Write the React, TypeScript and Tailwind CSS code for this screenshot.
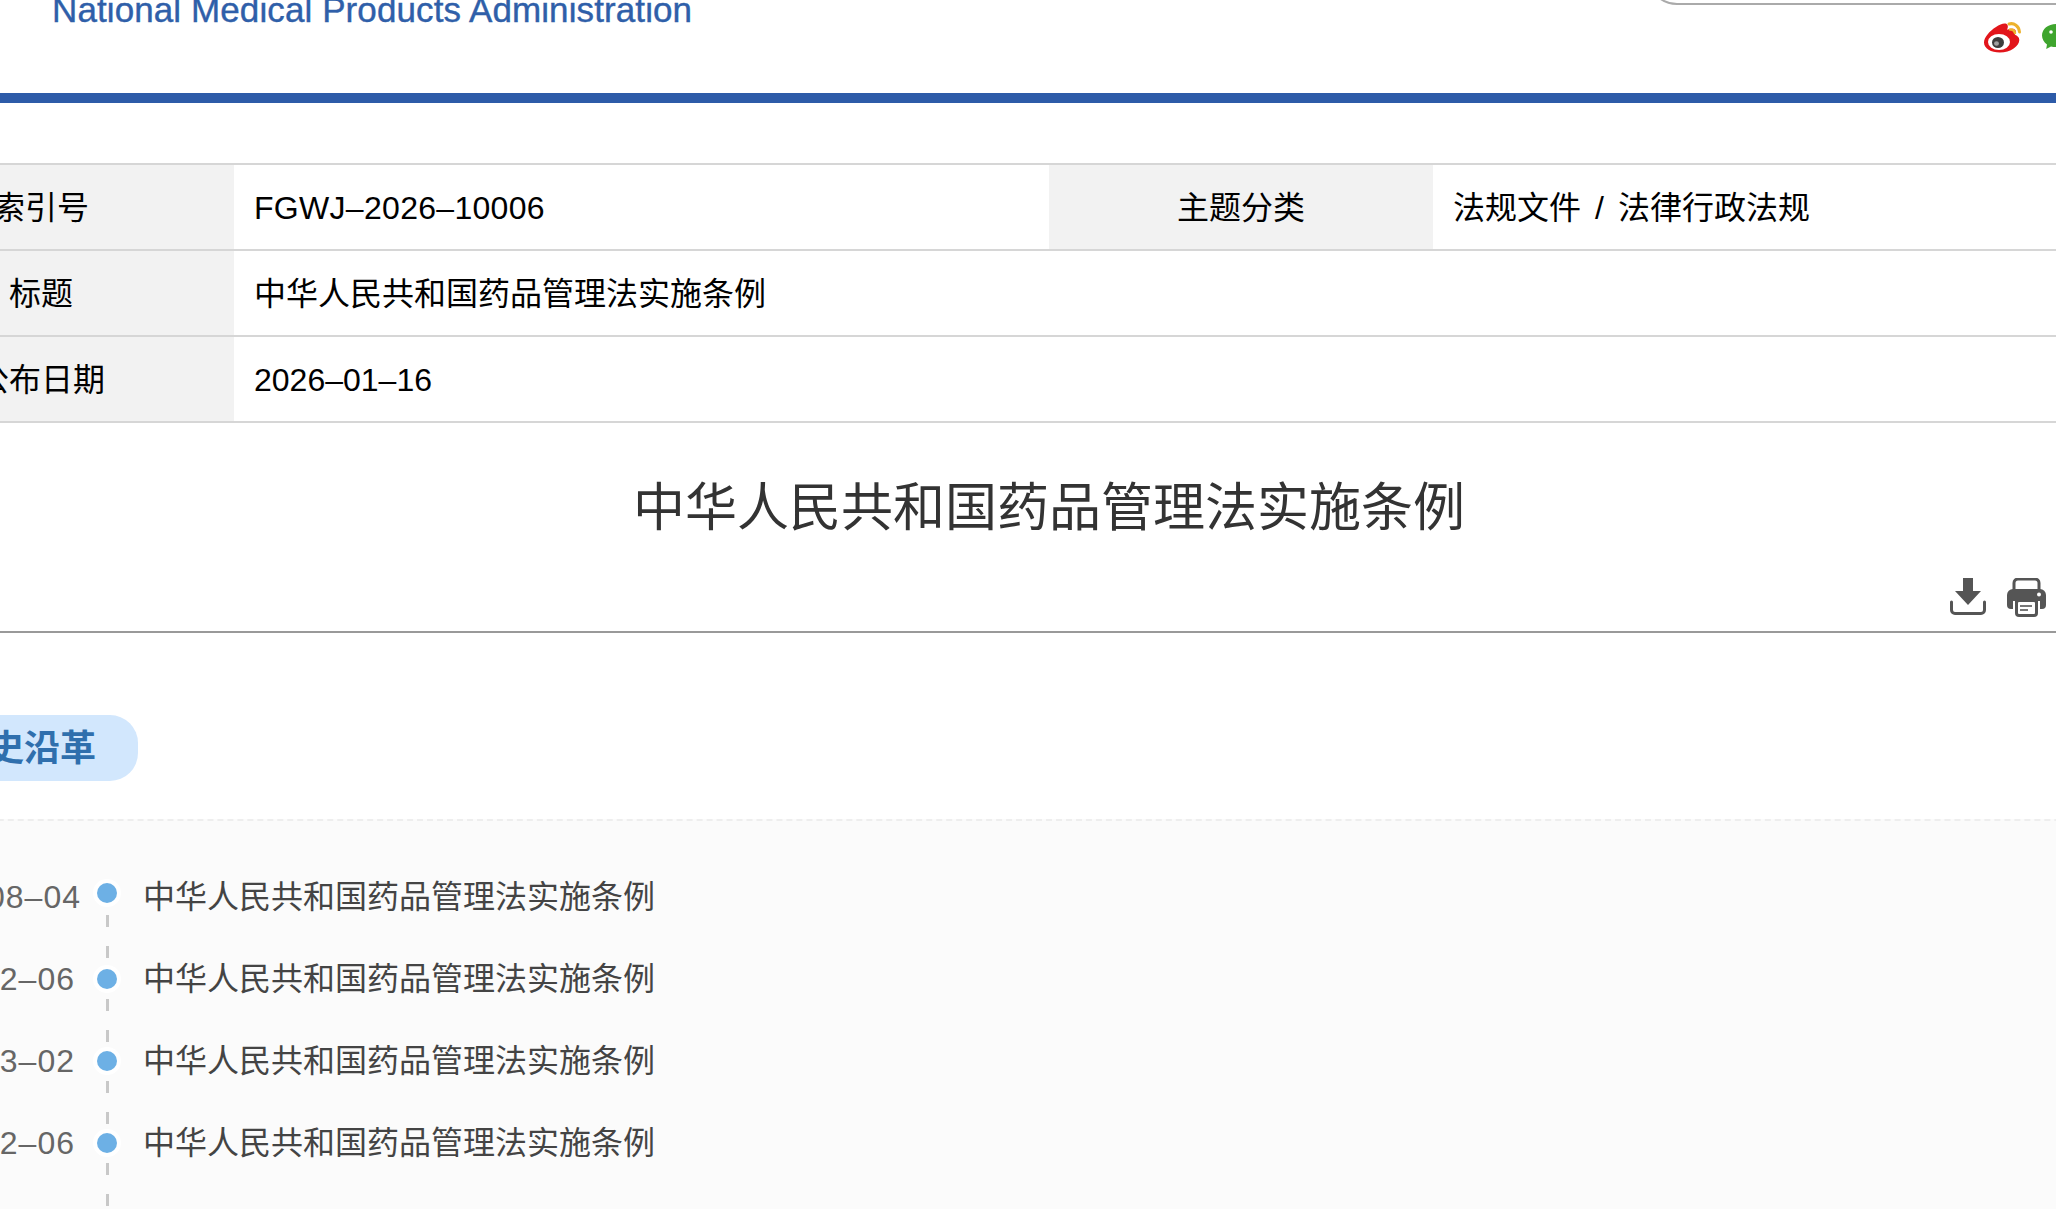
const title = "中华人民共和国药品管理法实施条例";

const history = [
  { date: "2002–08–04", name: title, narrow: false },
  { date: "2016–02–06", name: title, narrow: true },
  { date: "2019–03–02", name: title, narrow: true },
  { date: "2016–02–06", name: title, narrow: true },
];

function WeiboIcon() {
  return (
    <svg width="42" height="34" viewBox="0 0 42 34" className="block">
      <path d="M14 7c5-3.500 10-4.500 11.500-2 .7 1.300.3 3-.5 4.700 3.300-1.200 7-1.600 8.300.3 1 1.400.5 3.200-.5 4.800 2.500.8 4.500 2.500 4.500 5.200 0 6-8.500 12.500-19.500 12.500C9 32.500 2 28.500 2 22.500 2 17.500 7.500 11 14 7z" fill="#e2151b" />
      <ellipse cx="17" cy="22" rx="11" ry="8" fill="#ffffff" />
      <ellipse cx="16" cy="22.500" rx="6" ry="5.500" fill="#3d3d3d" />
      <ellipse cx="14.500" cy="23.500" rx="2.500" ry="2.200" fill="#a0a0a0" />
      <path d="M27 4c5-1.500 10 2 10.500 8" fill="none" stroke="#edb22c" strokeWidth="3" strokeLinecap="round" />
      <path d="M28 9.500c2.500-.5 4.500 1 5 3.500" fill="none" stroke="#edb22c" strokeWidth="2.500" strokeLinecap="round" />
    </svg>
  );
}

function WechatIcon() {
  return (
    <svg width="30" height="28" viewBox="0 0 30 28" className="block">
      <path d="M15 1C7 1 1 6 1 12.500c0 3.600 2 6.800 5 9l-.8 4.500 4.800-2.600c1.600.4 3.300.6 5 .6 8 0 14-5 14-11.500S23 1 15 1z" fill="#3fa52e" />
      <circle cx="10" cy="9" r="1.800" fill="#ffffff" />
      <circle cx="20" cy="9" r="1.800" fill="#ffffff" />
    </svg>
  );
}

function DownloadIcon() {
  return (
    <svg width="36" height="37" viewBox="0 0 36 37" className="block">
      <path d="M13 0h10v13h8L18 27 5 13h8z" fill="#555555" />
      <path d="M1.500 24v8a3.500 3.500 0 0 0 3.500 3.500h26a3.500 3.500 0 0 0 3.500-3.500v-8" fill="none" stroke="#555555" strokeWidth="3" strokeLinecap="round" />
    </svg>
  );
}

function PrintIcon() {
  return (
    <svg width="39" height="39" viewBox="0 0 39 39" className="block">
      <path d="M7 12V5a4 4 0 0 1 4-4h17a4 4 0 0 1 4 4v7" fill="none" stroke="#555555" strokeWidth="3" />
      <path d="M6 11h27a6 6 0 0 1 6 6v10a4 4 0 0 1-4 4h-2v-8H6v8H4a4 4 0 0 1-4-4V17a6 6 0 0 1 6-6z" fill="#555555" />
      <circle cx="32" cy="16.500" r="2" fill="#ffffff" />
      <path d="M8 21h23v14a4 4 0 0 1-4 4H12a4 4 0 0 1-4-4z" fill="#555555" />
      <rect x="11" y="24" width="17" height="12" rx="1" fill="#ffffff" />
      <rect x="13" y="27" width="12" height="2" fill="#777777" />
      <rect x="13" y="31" width="8" height="2" fill="#777777" />
    </svg>
  );
}

function Label({ children, narrow }: { children: React.ReactNode; narrow?: boolean }) {
  return (
    <div className={narrow ? "flex w-[384px] shrink-0 items-center justify-center bg-[#f2f2f2] pt-[2px]" : "flex w-[386px] shrink-0 items-center justify-center bg-[#f2f2f2] pt-[2px]"}>
      {children}
    </div>
  );
}

export default function App() {
  return (
    <div className="h-[1209px] w-[2056px] overflow-hidden bg-white font-['Liberation_Sans','Noto_Sans_CJK_SC',sans-serif]">
      {/* page is wider than the window, its left edge is cut off */}
      <div className="-ml-[152px] w-[2402px]">
        <header className="relative flex h-[93px] flex-col pl-[204px]">
          <div className="-mt-[11px] h-[42px] text-[35px] leading-[42px] tracking-[0.1px] text-[#2f5fa9] [-webkit-text-stroke:0.4px_#2f5fa9]">
            National Medical Products Administration
          </div>
          <div className="absolute -top-[30px] left-[1799px] h-[35px] w-[500px] rounded-b-[30px] border-2 border-[#aaaaaa]" />
          <div className="absolute left-[2134px] top-[20px] flex items-center gap-[17px]">
            <WeiboIcon />
            <WechatIcon />
          </div>
        </header>
        <div className="h-[10px] bg-[#2d5ba8]" />

        <section className="mt-[60px] border-t-2 border-[#d6d6d6] text-[32px] text-black">
          <div className="flex h-[86px] border-b-2 border-[#d6d6d6]">
            <Label>索引号</Label>
            <div className="flex w-[815px] items-center pt-[2px] pl-[20px] tracking-[0.3px]">FGWJ–2026–10006</div>
            <Label narrow>主题分类</Label>
            <div className="flex items-center pt-[2px] pl-[20px]">
              <div>
                法规文件<span className="mx-[14px]">/</span>法律行政法规
              </div>
            </div>
          </div>
          <div className="flex h-[86px] border-b-2 border-[#d6d6d6]">
            <Label>标题</Label>
            <div className="flex items-center pt-[2px] pl-[20px]">{title}</div>
          </div>
          <div className="flex h-[86px] border-b-2 border-[#d6d6d6]">
            <Label>公布日期</Label>
            <div className="flex items-center pt-[2px] pl-[20px]">2026–01–16</div>
          </div>
        </section>

        <section className="border-b-2 border-[#999999] pt-[55px]">
          <h1 className="text-center text-[52px] leading-[60px] font-normal text-[#333333]">{title}</h1>
          <div className="mt-[40px] flex items-start justify-end gap-[21px] pr-[204px] pb-[14px]">
            <DownloadIcon />
            <PrintIcon />
          </div>
        </section>

        <div className="mt-[82px] ml-[64px] inline-flex h-[66px] items-center rounded-[28px] bg-[#d2e7fd] pt-[2px] pr-[42px] pl-[40px] align-top text-[36px] font-semibold text-[#2f6fad]">
          历史沿革
        </div>

        <section className="mt-[38px] flex border-t-2 border-dashed border-[#eeeeee] bg-[#fbfbfb] pt-[35px] pl-[45px] text-[32px] text-[#444444]">
          <div className="w-[199px] shrink-0 tracking-[1px] text-[#666666]">
            {history.map((item, i) => (
              <div key={i} className={item.narrow ? "-ml-[6px] flex h-[82px] items-center" : "flex h-[82px] items-center"}>{item.date}</div>
            ))}
          </div>
          <div className="flex w-[30px] shrink-0 flex-col items-center pt-[31px]">
            {history.map((_, i) => (
              <div key={i} className="flex h-[82px] shrink-0 flex-col items-center">
                <div className={i === 0 ? "-mt-[4px] mb-[2px] h-[20px] w-[20px] rounded-full bg-[#6db0e5] ring-4 ring-white" : "h-[20px] w-[20px] rounded-full bg-[#6db0e5] ring-4 ring-white"} />
                <div className="mt-[10px] h-[12px] w-[3px] bg-[#c8c8c8]" />
                <div className="mt-[19px] h-[12px] w-[3px] bg-[#c8c8c8]" />
              </div>
            ))}
          </div>
          <div className="ml-[21px]">
            {history.map((item, i) => (
              <div key={i} className="flex h-[82px] items-center">{item.name}</div>
            ))}
          </div>
        </section>
      </div>
    </div>
  );
}
